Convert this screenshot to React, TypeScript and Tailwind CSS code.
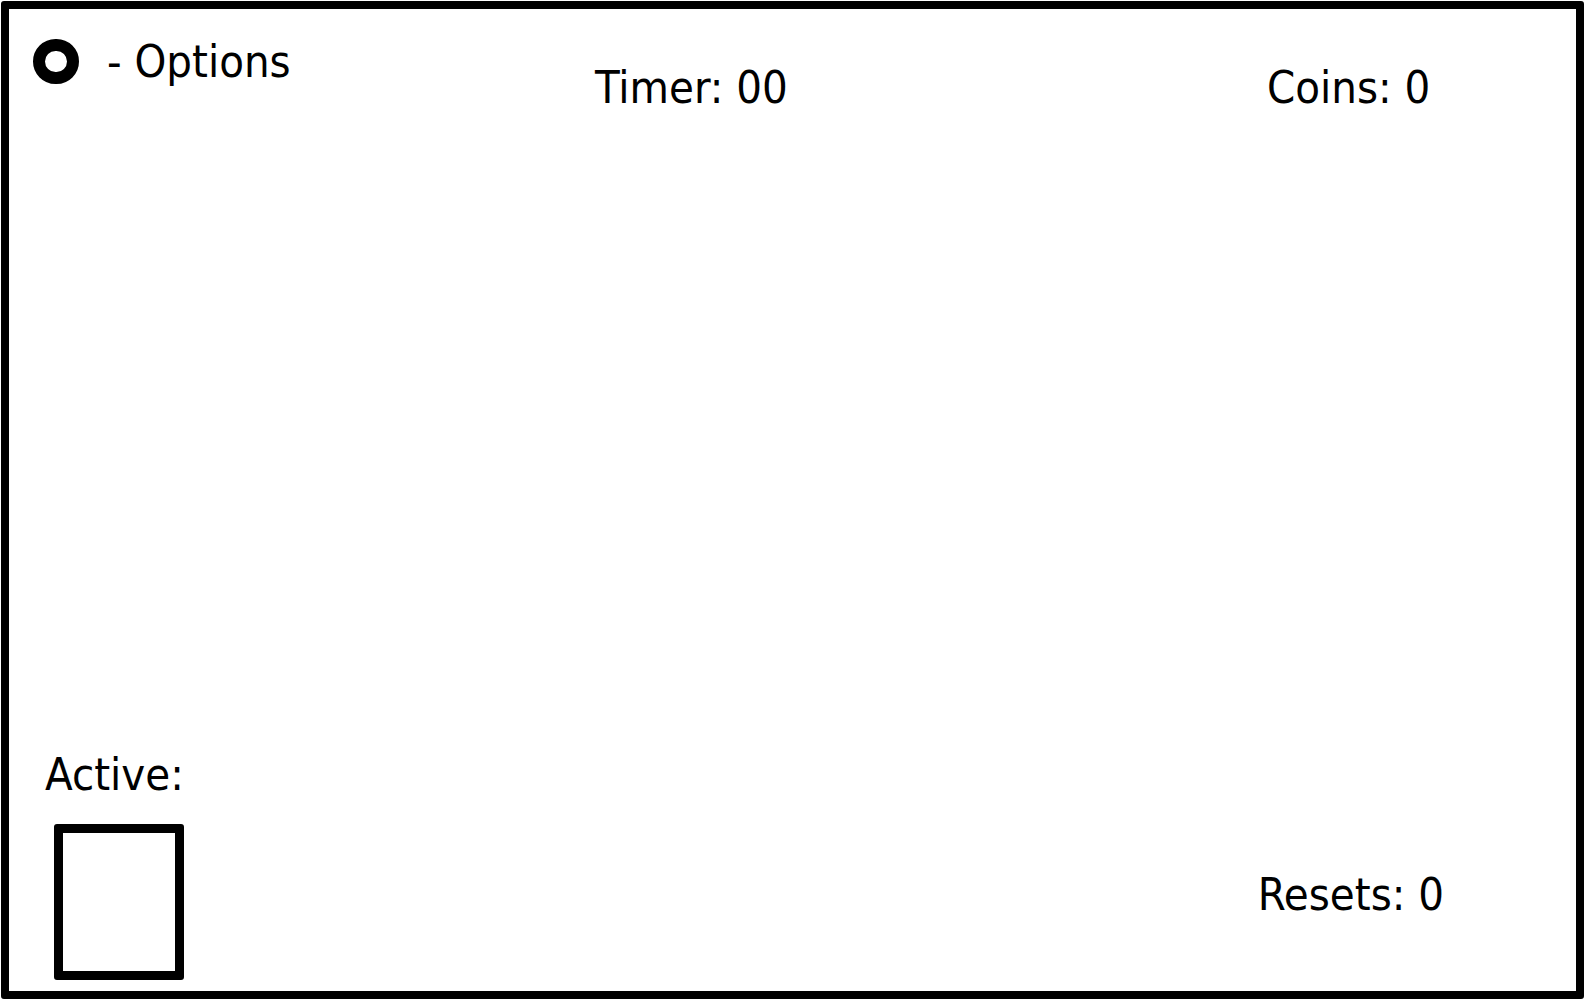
import React from 'react';

const font = { fontFamily: '"DejaVu Sans Condensed", "DejaVu Sans", sans-serif' };

export default function App() {
  return (
    <div className="w-screen h-screen p-px bg-white">
      <div
        style={font}
        className="h-full flex flex-col border-[8px] border-black rounded-[3px] text-black text-[45px] leading-[52px]"
      >
        {/* top bar */}
        <div className="flex items-start pl-[24px]">
          <div className="w-[562px] flex items-start pt-[27px]">
            <div className="mt-[3px] w-[46px] h-[45px] rounded-full border-[12px] border-black" />
            <span className="ml-[28px]">- Options</span>
          </div>
          <div className="w-[672px] pt-[53px]">Timer: 00</div>
          <div className="pt-[53px]">Coins: 0</div>
        </div>

        <div className="flex-1" />

        {/* bottom */}
        <div className="flex items-end justify-between pl-[36px] pr-[132px] pb-[11px]">
          <div className="flex flex-col">
            <span>Active:</span>
            <div className="mt-[23px] ml-[9px] w-[130px] h-[156px] border-[9px] border-black rounded-[3px]" />
          </div>
          <span className="mb-[59px]">Resets: 0</span>
        </div>
      </div>
    </div>
  );
}
